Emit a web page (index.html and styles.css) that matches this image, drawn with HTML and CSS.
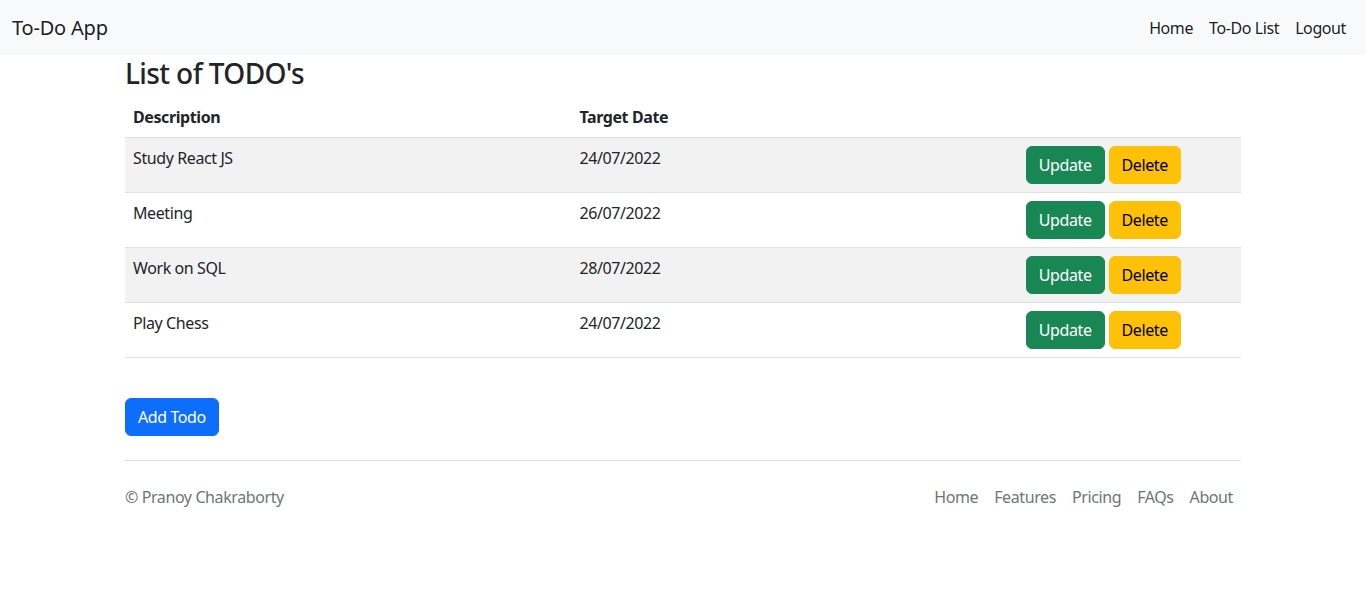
FILE: index.html
```html
<!DOCTYPE html>
<html lang="en">
<head>
<meta charset="utf-8">
<title>To-Do App</title>
<link rel="stylesheet" href="styles.css">
</head>
<body>
<header class="navbar">
  <a class="brand" href="#">To-Do App</a>
  <nav class="nav-links">
    <a href="#">Home</a>
    <a href="#">To-Do List</a>
    <a href="#">Logout</a>
  </nav>
</header>
<main class="container">
  <h2 class="title">List of TODO's</h2>
  <table class="todo-table">
    <thead>
      <tr><th class="col-desc">Description</th><th class="col-date">Target Date</th><th class="col-act"></th></tr>
    </thead>
    <tbody>
      <tr><td>Study React JS</td><td>24/07/2022</td><td><span class="actions"><button class="btn btn-success">Update</button><button class="btn btn-warning">Delete</button></span></td></tr>
      <tr><td>Meeting</td><td>26/07/2022</td><td><span class="actions"><button class="btn btn-success">Update</button><button class="btn btn-warning">Delete</button></span></td></tr>
      <tr><td>Work on SQL</td><td>28/07/2022</td><td><span class="actions"><button class="btn btn-success">Update</button><button class="btn btn-warning">Delete</button></span></td></tr>
      <tr><td>Play Chess</td><td>24/07/2022</td><td><span class="actions"><button class="btn btn-success">Update</button><button class="btn btn-warning">Delete</button></span></td></tr>
    </tbody>
  </table>
  <div class="add-row"><button class="btn btn-primary">Add Todo</button></div>
  <footer class="footer">
    <span class="copy">© Pranoy Chakraborty</span>
    <nav class="footer-links">
      <a href="#">Home</a>
      <a href="#">Features</a>
      <a href="#">Pricing</a>
      <a href="#">FAQs</a>
      <a href="#">About</a>
    </nav>
  </footer>
</main>
</body>
</html>
```

FILE: styles.css
```css
* { box-sizing: border-box; }
html, body { margin: 0; padding: 0; }
body {
  font-family: "Noto Sans", "Open Sans", sans-serif;
  font-size: 16px;
  line-height: 1.5;
  letter-spacing: -0.4px;
  color: #212529;
  background: #fff;
}
a { text-decoration: none; }

.navbar {
  display: flex;
  align-items: center;
  justify-content: space-between;
  height: 55px;
  padding: 0 12px;
  background: #f8f9fa;
}
.brand {
  font-size: 20px;
  color: rgba(0,0,0,.9);
  line-height: 30px;
  letter-spacing: -0.2px;
}
.nav-links { display: flex; }
.nav-links a {
  padding: 8px 8px;
  color: rgba(0,0,0,.9);
  line-height: 24px;
}

.container {
  max-width: 1140px;
  margin: 0 auto;
  padding: 0 12px;
}
.title {
  margin: 0 0 8px;
  padding-top: 2px;
  font-size: 28px;
  font-weight: 500;
  line-height: 32px;
  letter-spacing: -0.6px;
}
.todo-table {
  width: 100%;
  border-collapse: collapse;
  margin-bottom: 16px;
}
.todo-table th, .todo-table td {
  padding: 8px;
  text-align: left;
  vertical-align: top;
  border-bottom: 1px solid #dee2e6;
}
.todo-table th { font-weight: 700; vertical-align: bottom; }
.col-desc, .col-date { width: 40%; }
.col-act { width: 20%; }
.todo-table tbody tr:nth-child(odd) td { background: #f2f2f2; }
.actions { display: flex; gap: 4px; }

.btn {
  font-family: inherit;
  font-size: 16px;
  line-height: 24px;
  letter-spacing: -0.4px;
  padding: 6px 12px;
  border: 1px solid transparent;
  border-radius: 6px;
  cursor: pointer;
}
.btn-success { background: #198754; border-color: #198754; color: #fff; }
.btn-warning { background: #ffc107; border-color: #ffc107; color: #000; }
.btn-primary { background: #0d6efd; border-color: #0d6efd; color: #fff; }

.add-row { padding-top: 24px; }

.footer {
  display: flex;
  justify-content: space-between;
  align-items: center;
  margin-top: 24px;
  padding: 16px 0;
  border-top: 1px solid #dee2e6;
}
.copy { color: #6c757d; }
.footer-links { display: flex; }
.footer-links a {
  padding: 8px 8px;
  color: #6c757d;
  line-height: 24px;
}
```
